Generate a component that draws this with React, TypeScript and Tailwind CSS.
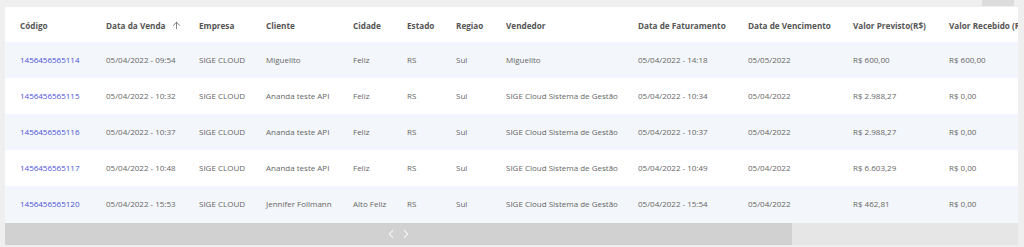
import { ArrowUp, ChevronLeft, ChevronRight } from "lucide-react";

interface Venda {
  codigo: string;
  dataVenda: string;
  empresa: string;
  cliente: string;
  cidade: string;
  estado: string;
  regiao: string;
  vendedor: string;
  dataFaturamento: string;
  dataVencimento: string;
  previsto: string;
  recebido: string;
}

const VENDAS: Venda[] = [
  {
    codigo: "1456456565114",
    dataVenda: "05/04/2022 - 09:54",
    empresa: "SIGE CLOUD",
    cliente: "Miguelito",
    cidade: "Feliz",
    estado: "RS",
    regiao: "Sul",
    vendedor: "Miguelito",
    dataFaturamento: "05/04/2022 - 14:18",
    dataVencimento: "05/05/2022",
    previsto: "R$ 600,00",
    recebido: "R$ 600,00",
  },
  {
    codigo: "1456456565115",
    dataVenda: "05/04/2022 - 10:32",
    empresa: "SIGE CLOUD",
    cliente: "Ananda teste API",
    cidade: "Feliz",
    estado: "RS",
    regiao: "Sul",
    vendedor: "SIGE Cloud Sistema de Gestão",
    dataFaturamento: "05/04/2022 - 10:34",
    dataVencimento: "05/04/2022",
    previsto: "R$ 2.988,27",
    recebido: "R$ 0,00",
  },
  {
    codigo: "1456456565116",
    dataVenda: "05/04/2022 - 10:37",
    empresa: "SIGE CLOUD",
    cliente: "Ananda teste API",
    cidade: "Feliz",
    estado: "RS",
    regiao: "Sul",
    vendedor: "SIGE Cloud Sistema de Gestão",
    dataFaturamento: "05/04/2022 - 10:37",
    dataVencimento: "05/04/2022",
    previsto: "R$ 2.988,27",
    recebido: "R$ 0,00",
  },
  {
    codigo: "1456456565117",
    dataVenda: "05/04/2022 - 10:48",
    empresa: "SIGE CLOUD",
    cliente: "Ananda teste API",
    cidade: "Feliz",
    estado: "RS",
    regiao: "Sul",
    vendedor: "SIGE Cloud Sistema de Gestão",
    dataFaturamento: "05/04/2022 - 10:49",
    dataVencimento: "05/04/2022",
    previsto: "R$ 6.603,29",
    recebido: "R$ 0,00",
  },
  {
    codigo: "1456456565120",
    dataVenda: "05/04/2022 - 15:53",
    empresa: "SIGE CLOUD",
    cliente: "Jennifer Follmann",
    cidade: "Alto Feliz",
    estado: "RS",
    regiao: "Sul",
    vendedor: "SIGE Cloud Sistema de Gestão",
    dataFaturamento: "05/04/2022 - 15:54",
    dataVencimento: "05/04/2022",
    previsto: "R$ 462,81",
    recebido: "R$ 0,00",
  },
];

const COLUNAS =
  "grid grid-cols-[86px_93px_67px_87px_54px_49px_50px_132px_110px_105px_96px_120px]";

export default function App() {
  return (
    <div
      className="h-[247px] w-[1024px] overflow-hidden bg-[#efefef] pl-[5px] pr-[6px]"
      style={{ fontFamily: '"Open Sans", sans-serif' }}
    >
      <div className="flex h-[7px] justify-end pr-[4px]">
        <div className="h-[6px] w-[32px] bg-[#dcdcdc]" />
      </div>
      <div className="overflow-hidden bg-white">
        <div className={`${COLUNAS} h-[35px] items-center whitespace-nowrap pl-[15px] pt-[3px] text-[8.2px] font-bold text-[#555]`}>
          <span>Código</span>
          <span className="flex items-center gap-[5px]">
            Data da Venda
            <ArrowUp size={11} strokeWidth={1.6} className="text-[#555]" />
          </span>
          <span>Empresa</span>
          <span>Cliente</span>
          <span>Cidade</span>
          <span>Estado</span>
          <span>Regiao</span>
          <span>Vendedor</span>
          <span>Data de Faturamento</span>
          <span>Data de Vencimento</span>
          <span>Valor Previsto(R$)</span>
          <span>Valor Recebido (R$)</span>
        </div>
        {VENDAS.map((v, i) => (
          <div
            key={v.codigo}
            className={`${COLUNAS} h-[36px] items-center whitespace-nowrap pl-[15px] text-[8px] text-[#666] ${
              i % 2 === 0 ? "bg-[#f3f6fa]" : "bg-white"
            }`}
          >
            <span className="text-[#4b53d8]">{v.codigo}</span>
            <span>{v.dataVenda}</span>
            <span>{v.empresa}</span>
            <span>{v.cliente}</span>
            <span>{v.cidade}</span>
            <span>{v.estado}</span>
            <span>{v.regiao}</span>
            <span>{v.vendedor}</span>
            <span>{v.dataFaturamento}</span>
            <span>{v.dataVencimento}</span>
            <span>{v.previsto}</span>
            <span>{v.recebido}</span>
          </div>
        ))}
        <div className="h-[1px] bg-[#f3f6fa]" />
        <div className="flex h-[22px] bg-[#e6e6e6]">
          <div className="flex w-[787px] items-center justify-center gap-[1px] bg-[#d1d1d1] text-white">
            <ChevronLeft size={14} strokeWidth={1.8} />
            <ChevronRight size={14} strokeWidth={1.8} />
          </div>
        </div>
      </div>
    </div>
  );
}
